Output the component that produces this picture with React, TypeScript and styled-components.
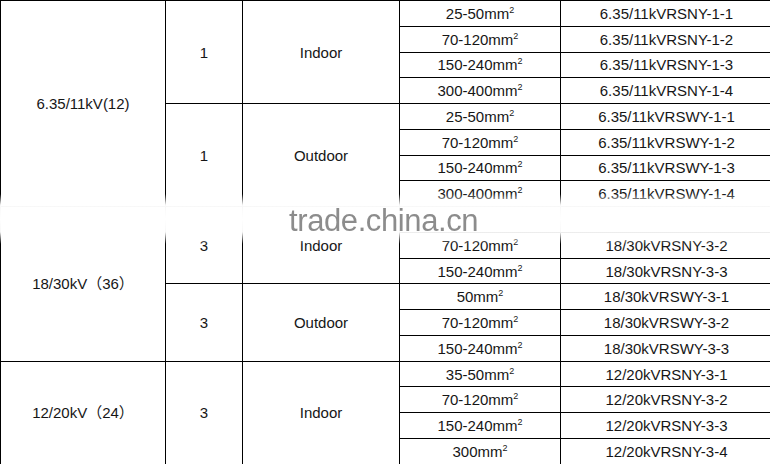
import React from 'react';
import styled, { createGlobalStyle } from 'styled-components';

const GlobalStyle = createGlobalStyle`
    html, body {
        margin: 0;
        padding: 0;
        background: #fff;
        overflow: hidden;
    }
`;

const Page = styled.div`
    position: relative;
    width: 770px;
    height: 464px;
    overflow: hidden;
    font-family: 'Liberation Sans', Arial, 'Noto Sans CJK SC', sans-serif;
    color: #161616;
`;

const Table = styled.table`
    width: 772px;
    height: 464px;
    border-collapse: collapse;
    table-layout: fixed;
    font-size: 15px;
`;

const Row = styled.tr`
    height: 25.78px;
`;

const Cell = styled.td`
    border: 1px solid #000;
    padding: 0;
    text-align: center;
    vertical-align: middle;
    line-height: 1;
    white-space: nowrap;
`;

const Sup = styled.sup`
    font-size: 9px;
    vertical-align: 0;
    position: relative;
    top: -6px;
`;

/* faded white band that the watermark sits on */
const Band = styled.div`
    position: absolute;
    left: 0;
    right: 0;
    top: 194px;
    height: 50px;
    background: linear-gradient(
        to bottom,
        rgba(255, 255, 255, 0) 0%,
        rgba(255, 255, 255, 0.97) 22%,
        rgba(255, 255, 255, 1) 50%,
        rgba(255, 255, 255, 0.97) 76%,
        rgba(255, 255, 255, 0) 100%
    );
`;

const Watermark = styled.div`
    position: absolute;
    left: 289px;
    top: 203px;
    font-size: 31px;
    letter-spacing: -0.4px;
    color: rgba(95, 95, 95, 0.72);
    filter: blur(0.4px);
`;

type Item = { size: string; code: string };

type Group = {
    voltage: string;
    parts: { phase: string; place: string; items: Item[] }[];
};

// the first 18/30kV row sits under the watermark band and is not readable
const groups: Group[] = [
    {
        voltage: '6.35/11kV(12)',
        parts: [
            {
                phase: '1',
                place: 'Indoor',
                items: [
                    { size: '25-50mm', code: '6.35/11kVRSNY-1-1' },
                    { size: '70-120mm', code: '6.35/11kVRSNY-1-2' },
                    { size: '150-240mm', code: '6.35/11kVRSNY-1-3' },
                    { size: '300-400mm', code: '6.35/11kVRSNY-1-4' },
                ],
            },
            {
                phase: '1',
                place: 'Outdoor',
                items: [
                    { size: '25-50mm', code: '6.35/11kVRSWY-1-1' },
                    { size: '70-120mm', code: '6.35/11kVRSWY-1-2' },
                    { size: '150-240mm', code: '6.35/11kVRSWY-1-3' },
                    { size: '300-400mm', code: '6.35/11kVRSWY-1-4' },
                ],
            },
        ],
    },
    {
        voltage: '18/30kV（36）',
        parts: [
            {
                phase: '3',
                place: 'Indoor',
                items: [
                    { size: '', code: '' },
                    { size: '70-120mm', code: '18/30kVRSNY-3-2' },
                    { size: '150-240mm', code: '18/30kVRSNY-3-3' },
                ],
            },
            {
                phase: '3',
                place: 'Outdoor',
                items: [
                    { size: '50mm', code: '18/30kVRSWY-3-1' },
                    { size: '70-120mm', code: '18/30kVRSWY-3-2' },
                    { size: '150-240mm', code: '18/30kVRSWY-3-3' },
                ],
            },
        ],
    },
    {
        voltage: '12/20kV（24）',
        parts: [
            {
                phase: '3',
                place: 'Indoor',
                items: [
                    { size: '35-50mm', code: '12/20kVRSNY-3-1' },
                    { size: '70-120mm', code: '12/20kVRSNY-3-2' },
                    { size: '150-240mm', code: '12/20kVRSNY-3-3' },
                    { size: '300mm', code: '12/20kVRSNY-3-4' },
                ],
            },
        ],
    },
];

export default function App() {
    const rows: React.ReactNode[] = [];

    groups.forEach((g, gi) => {
        const total = g.parts.reduce((n, p) => n + p.items.length, 0);
        g.parts.forEach((p, pi) => {
            p.items.forEach((it, ii) => {
                rows.push(
                    <Row key={`${gi}-${pi}-${ii}`}>
                        {pi === 0 && ii === 0 && <Cell rowSpan={total}>{g.voltage}</Cell>}
                        {ii === 0 && <Cell rowSpan={p.items.length}>{p.phase}</Cell>}
                        {ii === 0 && <Cell rowSpan={p.items.length}>{p.place}</Cell>}
                        <Cell>
                            {it.size}
                            {it.size && <Sup>2</Sup>}
                        </Cell>
                        <Cell>{it.code}</Cell>
                    </Row>
                );
            });
        });
    });

    return (
        <>
            <GlobalStyle />
            <Page>
                <Table>
                    <colgroup>
                        <col style={{ width: 165 }} />
                        <col style={{ width: 77 }} />
                        <col style={{ width: 157 }} />
                        <col style={{ width: 161 }} />
                        <col style={{ width: 212 }} />
                    </colgroup>
                    <tbody>{rows}</tbody>
                </Table>
                <Band />
                <Watermark>trade.china.cn</Watermark>
            </Page>
        </>
    );
}
